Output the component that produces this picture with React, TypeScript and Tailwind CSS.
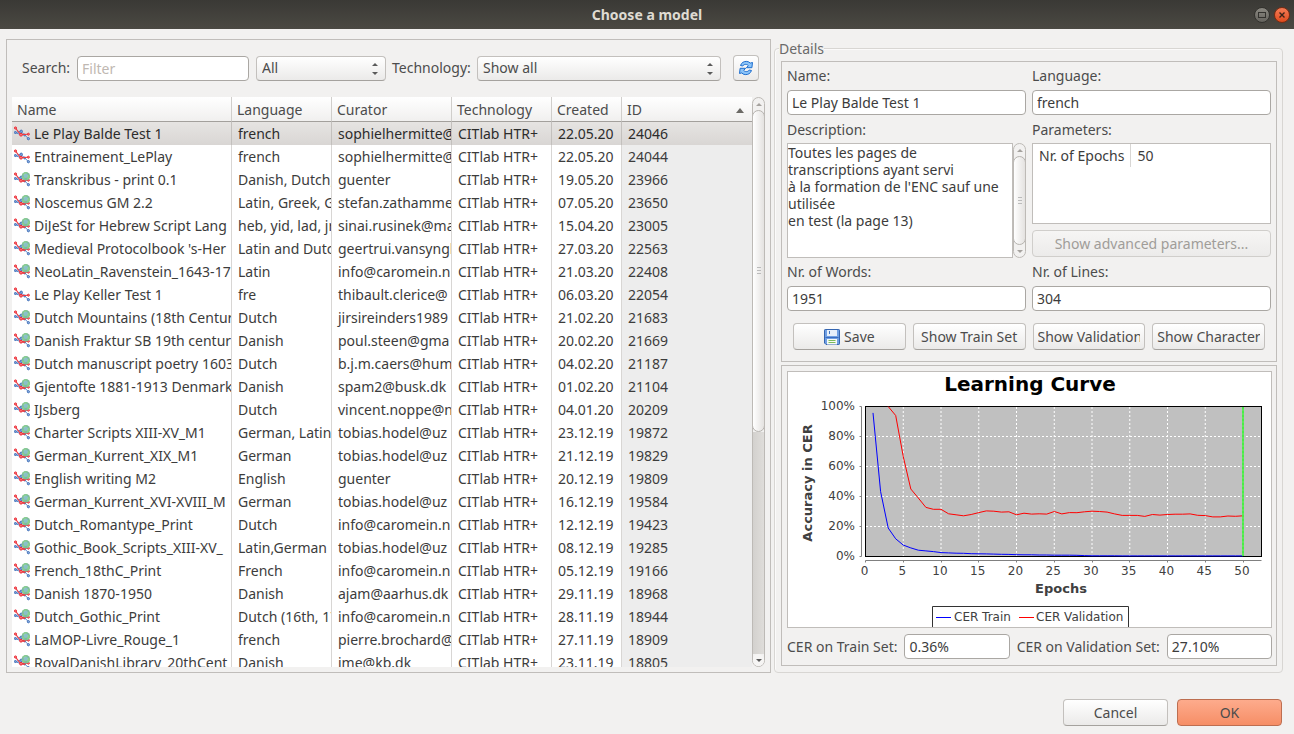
import React from "react";

type Model = [name: string, language: string, curator: string, created: string, id: number, shared: boolean];

const models: Model[] = [
  ["Le Play Balde Test 1", "french", "sophielhermitte@", "22.05.20", 24046, false],
  ["Entrainement_LePlay", "french", "sophielhermitte@", "22.05.20", 24044, false],
  ["Transkribus - print 0.1", "Danish, Dutch,", "guenter", "19.05.20", 23966, true],
  ["Noscemus GM 2.2", "Latin, Greek, G", "stefan.zathamme", "07.05.20", 23650, true],
  ["DiJeSt for Hebrew Script Lang", "heb, yid, lad, jr", "sinai.rusinek@ma", "15.04.20", 23005, true],
  ["Medieval Protocolbook 's-Her", "Latin and Dutc", "geertrui.vansyngh", "27.03.20", 22563, true],
  ["NeoLatin_Ravenstein_1643-17", "Latin", "info@caromein.n", "21.03.20", 22408, true],
  ["Le Play Keller Test 1", "fre", "thibault.clerice@", "06.03.20", 22054, false],
  ["Dutch Mountains (18th Centur", "Dutch", "jirsireinders1989", "21.02.20", 21683, true],
  ["Danish Fraktur SB 19th centur", "Danish", "poul.steen@gma", "20.02.20", 21669, true],
  ["Dutch manuscript poetry 1603", "Dutch", "b.j.m.caers@hum", "04.02.20", 21187, true],
  ["Gjentofte 1881-1913 Denmark", "Danish", "spam2@busk.dk", "01.02.20", 21104, true],
  ["IJsberg", "Dutch", "vincent.noppe@n", "04.01.20", 20209, true],
  ["Charter Scripts XIII-XV_M1", "German, Latin", "tobias.hodel@uz", "23.12.19", 19872, true],
  ["German_Kurrent_XIX_M1", "German", "tobias.hodel@uz", "21.12.19", 19829, true],
  ["English writing M2", "English", "guenter", "20.12.19", 19809, true],
  ["German_Kurrent_XVI-XVIII_M", "German", "tobias.hodel@uz", "16.12.19", 19584, true],
  ["Dutch_Romantype_Print", "Dutch", "info@caromein.n", "12.12.19", 19423, true],
  ["Gothic_Book_Scripts_XIII-XV_", "Latin,German", "tobias.hodel@uz", "08.12.19", 19285, true],
  ["French_18thC_Print", "French", "info@caromein.n", "05.12.19", 19166, true],
  ["Danish 1870-1950", "Danish", "ajam@aarhus.dk", "29.11.19", 18968, true],
  ["Dutch_Gothic_Print", "Dutch (16th, 17", "info@caromein.n", "28.11.19", 18944, true],
  ["LaMOP-Livre_Rouge_1", "french", "pierre.brochard@", "27.11.19", 18909, true],
  ["RoyalDanishLibrary_20thCent", "Danish", "jme@kb.dk", "23.11.19", 18805, true],
];

const trainCer = [
  95.7, 43.3, 19, 11.8, 7.6, 5.7, 4.2, 3.7, 3.3, 2.6, 2.4, 2.2, 2.1, 1.9, 1.8, 1.7, 1.6, 1.5, 1.4, 1.2, 1.1, 1.1, 1, 1,
  0.9, 0.9, 0.9, 0.8, 0.6, 0.5, 0.5, 0.5, 0.5, 0.4, 0.4, 0.4, 0.4, 0.4, 0.4, 0.4, 0.4, 0.4, 0.4, 0.4, 0.4, 0.4, 0.4, 0.4,
  0.4, 0.4,
];
const validationCer = [
  100, 94, 66.5, 45, 39, 32.7, 31.5, 31.5, 28.5, 27.8, 27.1, 28, 29.3, 30.4, 30.2, 29.6, 29.8, 27.8, 28.9, 28.3, 28.5,
  28.3, 30, 28.4, 29.3, 29.2, 29.8, 30.2, 30, 29.6, 28.4, 27.4, 27.4, 27.4, 26.7, 28, 27.6, 28, 28.2, 28.2, 28.4, 27.5,
  27.3, 26.4, 26.4, 27, 26.8, 27.1,
];

const plotX = (epoch: number) => 77.5 + epoch * 7.55;
const plotY = (percent: number) => 184.5 - percent * 1.5;
const toPoints = (values: number[], firstEpoch: number) =>
  values.map((v, i) => `${plotX(i + firstEpoch).toFixed(1)},${plotY(v).toFixed(1)}`).join(" ");

function NetworkIcon({ shared }: { shared: boolean }) {
  return (
    <svg viewBox="0 0 16 16" className="size-4 shrink-0" aria-hidden="true">
      <g fill="none" strokeWidth="1">
        <path d="M1.200 6.500 7 5.400 10.500 8.800 14.600 12.800M1.500 6.800 7 8.600" stroke="#5b86c8" />
        <g stroke="#3f6fb8" fill="#8fb2e3">
          <circle cx="1.300" cy="6.500" r="1" />
          <circle cx="7.200" cy="5.300" r="1.200" />
          <circle cx="10.600" cy="9" r="0.900" />
          <circle cx="14.400" cy="12.700" r="1.100" />
        </g>
        {shared && <path d="M7 8.600 10.500 9.500 12.500 7" stroke="#ee3a42" strokeWidth="1.100" />}
        <path d="M1.500 2 4 5.400 6.900 8.600 14.500 8.200" stroke="#ee3a42" strokeWidth="1.100" />
        <g stroke="#e8313b" fill="#f77">
          <circle cx="1.500" cy="2" r="1.100" />
          <circle cx="7" cy="8.700" r="1.400" />
          <circle cx="14.400" cy="8.200" r="1" />
        </g>
      </g>
      {shared && (
        <g>
          <circle cx="11.900" cy="4.200" r="4.200" fill="#7dbb9c" />
          <path d="M8.600 2c1-1.500 3-2 4.600-1.500-.3 1.300-1.400 1.200-1.800 2.300-.4 1-1.900.8-2.800-.8ZM8 4.600c1.700.1 2.700.8 2.500 2.200l-.6 1.100C8.600 7 7.900 5.900 8 4.600ZM13 3.200c1.200-.7 2.200-.2 2.900.9-.1 1.900-1 3-2.500 3.700-.7-1.400-.1-2-.4-4.600Z" fill="#8ad08a" />
          <circle cx="11.700" cy="3.800" r="2.200" fill="#8fc3dd" opacity=".7" />
        </g>
      )}
    </svg>
  );
}

function RefreshIcon() {
  return (
    <svg viewBox="0 0 16 16" className="size-4" aria-hidden="true">
      <g fill="#8cc4f8" stroke="#1f6fd0" strokeWidth="1" strokeLinejoin="round">
        <path d="M2.500 5.500C3.500 2.500 6 1.200 8.800 1.400c1.600.1 2.600.8 3.400 1.700l2.300-.6-.6 5.200H8.400l1.900-2.100c-.8-.9-1.600-1.200-2.600-1.200-1.400 0-2.300.5-2.900 1.600Z" />
        <path d="M13.500 10.500c-1 3-3.500 4.300-6.300 4.100-1.600-.1-2.600-.8-3.400-1.700l-2.300.6.6-5.200h5.500l-1.900 2.100c.8.9 1.600 1.200 2.600 1.200 1.400 0 2.300-.5 2.900-1.600Z" />
      </g>
    </svg>
  );
}

function SaveIcon() {
  return (
    <svg viewBox="0 0 16 16" className="size-4" aria-hidden="true">
      <path d="M.5 1.200Q.5.5 1.200.5h13.600q.7 0 .7.7v13.600q0 .7-.7.700H2L.5 14Z" fill="#6f9fe3" stroke="#3565b0" />
      <rect x="3" y="1" width="10" height="6" fill="#e6effb" />
      <path d="M5.500 2v3" stroke="#4475bd" />
      <path d="M1.500 8.500h13" stroke="#3a6cc0" />
      <rect x="3" y="10" width="10" height="5.500" fill="#f7f9f4" />
      <path d="M4.500 11.500h7M4.500 13.500h7" stroke="#7cba5c" />
    </svg>
  );
}

function Arrow({ up = false }: { up?: boolean }) {
  return (
    <svg viewBox="0 0 6 4" preserveAspectRatio="none" className="h-[3px] w-1.5" aria-hidden="true">
      <path d={up ? "M0 4 3 0 6 4Z" : "M0 0 3 4 6 0Z"} fill="currentColor" />
    </svg>
  );
}

const buttonLook =
  "flex items-center justify-center rounded-[4px] border border-[#c3c0bd] border-b-[#a5a29e] bg-linear-to-b from-white to-[#ebeae9] text-[#4c4c4c]";
const inputLook =
  "block h-[25px] w-full min-w-0 rounded-[4px] border border-[#aaa7a3] bg-white px-1 text-[#3c3c3c] outline-none placeholder:text-[#bfb8b2]";

function Select({ label, options, className }: { label: string; options: string[]; className: string }) {
  return (
    <div className={`relative min-w-0 ${className}`}>
      <select
        aria-label={label}
        className="block h-[25px] w-full appearance-none rounded-[4px] border border-[#c3c0bd] border-b-[#a5a29e] bg-linear-to-b from-white to-[#ebeae9] px-[5px] text-[#4c4c4c] outline-none"
      >
        {options.map((o) => (
          <option key={o}>{o}</option>
        ))}
      </select>
      <span className="pointer-events-none absolute inset-y-0 right-2 flex flex-col items-center justify-center gap-1.5 pt-0.5 text-[#5a5a5a]">
        <Arrow up />
        <Arrow />
      </span>
    </div>
  );
}

function Scrollbar({ thumb, rest, end }: { thumb: string; rest: string; end: string }) {
  return (
    <div className="flex w-[13px] shrink-0 flex-col overflow-hidden rounded-full border border-[#bdbab6] bg-[#f2f1f0]" aria-hidden="true">
      <span className="flex h-3 shrink-0 items-center justify-center text-[#a5a29e]">
        <Arrow up />
      </span>
      <span className={`-mx-px flex flex-col items-center justify-center gap-0.5 rounded-full border border-[#b5b2ae] bg-linear-to-r from-white to-[#e4e2e0] ${thumb}`}>
        <i className="h-px w-1 bg-[#bbb]" />
        <i className="h-px w-1 bg-[#bbb]" />
        <i className="h-px w-1 bg-[#bbb]" />
      </span>
      <span className={`bg-linear-to-r from-[#d3d1ce] to-[#dfddda] ${rest}`} />
      <span className={`flex h-3 shrink-0 items-center justify-center ${end}`}>
        <Arrow />
      </span>
    </div>
  );
}

function Field({ id, label, value }: { id: string; label: string; value: string }) {
  return (
    <div className="flex flex-col gap-1">
      <label htmlFor={id} className="leading-5">{label}</label>
      <input id={id} className={inputLook} defaultValue={value} readOnly />
    </div>
  );
}

function LearningCurve() {
  const epochs = [0, 5, 10, 15, 20, 25, 30, 35, 40, 45, 50];
  const percents = [0, 20, 40, 60, 80, 100];
  return (
    <svg viewBox="0 0 483 255" preserveAspectRatio="xMidYMin meet" className="block h-full w-full font-['DejaVu_Sans',sans-serif]" role="img" aria-label="Learning Curve">
      <text x="242" y="19" textAnchor="middle" fontSize="20" fontWeight="700" fill="#000">Learning Curve</text>
      <rect x="77.500" y="34.500" width="396" height="150" fill="#c0c0c0" />
      <g stroke="#fff" strokeWidth="1" strokeDasharray="2 2">
        {epochs.slice(1).map((e) => <line key={e} x1={plotX(e)} x2={plotX(e)} y1="35" y2="184" />)}
        {percents.slice(1, 5).map((p) => <line key={p} x1="78" x2="473" y1={plotY(p)} y2={plotY(p)} />)}
      </g>
      <rect x="77.500" y="34.500" width="396" height="150" fill="none" stroke="#000" />
      <polyline points={toPoints(trainCer, 1)} fill="none" stroke="#00f" strokeWidth="1" />
      <polyline points={toPoints(validationCer, 3)} fill="none" stroke="#f00" strokeWidth="1" />
      <line x1={plotX(50)} x2={plotX(50)} y1="35" y2="184" stroke="#5fe85a" strokeWidth="2" />
      <line x1={plotX(50)} x2={plotX(50)} y1="35" y2="184" stroke="#35f035" strokeWidth="1" strokeDasharray="2 2" />
      <g stroke="#808080" strokeWidth="1">
        <path d="M73.500 34.500V184.500M77.500 188.500H473.500" />
        {percents.map((p) => <path key={p} d={`M71.500 ${plotY(p)}h2`} />)}
        {epochs.map((e) => <path key={e} d={`M${Math.floor(plotX(e)) + 0.5} 188.500v2`} />)}
      </g>
      <g fontSize="12" fill="#404040">
        {percents.map((p) => <text key={p} x="67" y={plotY(p) + 3.5} textAnchor="end">{p}%</text>)}
        {epochs.map((e) => <text key={e} x={plotX(e) - 1} y="203" textAnchor="middle">{e}</text>)}
      </g>
      <g fontSize="13" fontWeight="700" fill="#404040" textAnchor="middle">
        <text x="273" y="221">Epochs</text>
        <text transform="translate(24 111) rotate(-90)">Accuracy in CER</text>
      </g>
      <path d="M144.500 255V234.500H340.500V255" fill="none" stroke="#333" />
      <path d="M148 245.500h15" stroke="#00f" />
      <path d="M231 245.500h15" stroke="#f00" />
      <g fontSize="12" fill="#404040">
        <text x="166" y="249">CER Train</text>
        <text x="248" y="249">CER Validation</text>
      </g>
    </svg>
  );
}

export default function App() {
  const th = "border-r border-[#d0cecb] px-[5px] pt-0.5 text-left font-normal";
  const td = "overflow-hidden border-r border-[#d8d6d4] pl-1.5 whitespace-nowrap";
  return (
    <div className="flex h-screen flex-col bg-[#f2f1f0] font-['Noto_Sans',sans-serif] text-[14px] leading-5 text-[#4c4c4c]">
      <header className="relative flex h-[29px] shrink-0 items-center justify-center bg-linear-to-b from-[#3a3935] to-[#4b4943] text-[#dfdbd2]">
        <h1 className="font-bold">Choose a model</h1>
        <div className="absolute right-1 flex gap-1">
          <button aria-label="Maximize" className="flex size-4 items-center justify-center rounded-full border border-[#33322e] bg-linear-to-b from-[#8a8881] to-[#66645e]">
            <span className="h-1.5 w-2 border border-[#33322e]" />
          </button>
          <button aria-label="Close" className="flex size-4 items-center justify-center rounded-full border border-[#7a2c12] bg-linear-to-b from-[#f47b55] to-[#df4b1b]">
            <svg viewBox="0 0 8 8" className="size-2"><path d="m1.500 1.500 5 5m0-5-5 5" stroke="#3b2318" strokeWidth="1.400" /></svg>
          </button>
        </div>
      </header>

      <main className="grid min-h-0 flex-1 grid-cols-[minmax(0,3fr)_minmax(0,2fr)] gap-[3px] pt-2.5 pr-2.5 pl-1.5">
        <section className="flex min-h-0 flex-col border border-[#c0bdba] p-[5px]">
          <div className="flex items-center pt-2.5 pr-1.5 pb-4 pl-2.5">
            <label htmlFor="search" className="w-[55px] shrink-0">Search:</label>
            <div className="min-w-0 flex-[172]">
              <input id="search" placeholder="Filter" className={inputLook} />
            </div>
            <Select label="Filter scope" options={["All", "Mine", "Shared"]} className="ml-[7px] flex-[130]" />
            <span className="ml-1.5 w-[85px] shrink-0">Technology:</span>
            <Select label="Technology" options={["Show all", "CITlab HTR+"]} className="flex-[244]" />
            <button aria-label="Refresh" className={`${buttonLook} ml-3 size-[26px] shrink-0`}><RefreshIcon /></button>
          </div>
          <div className="flex min-h-0 flex-1">
            <div className="min-w-0 flex-1 overflow-y-auto bg-white [scrollbar-width:none]">
              <table className="w-full table-fixed border-separate border-spacing-0 text-[#3c3c3c]">
                <colgroup>
                  <col className="w-[220px]" />
                  <col className="w-[100px]" />
                  <col className="w-[120px]" />
                  <col className="w-[100px]" />
                  <col className="w-[70px]" />
                  <col />
                </colgroup>
                <thead className="sticky top-0 z-10 text-[#4c4c4c]">
                  <tr className="h-[25px] bg-linear-to-b from-white to-[#f0efee] *:border-b *:border-b-[#a3a09c]">
                    <th className={th}>Name</th>
                    <th className={th}>Language</th>
                    <th className={th}>Curator</th>
                    <th className={th}>Technology</th>
                    <th className={th}>Created</th>
                    <th className="px-[5px] pt-0.5 text-left font-normal">
                      <span className="flex items-center justify-between pr-[3px]">ID<svg viewBox="0 0 8 5" className="h-[5px] w-2"><path d="M0 5 4 0 8 5Z" fill="#6b6965" /></svg></span>
                    </th>
                  </tr>
                </thead>
                <tbody>
                  {models.map(([name, language, curator, created, id, shared], i) => (
                    <tr key={id} className={i === 0 ? "h-[23px] bg-linear-to-b from-[#e6e4e2] to-[#d9d6d4] text-[#2c2c2c] *:border-[#c3c0bd]" : "h-[23px]"}>
                      <td className="overflow-hidden border-r border-[#d8d6d4] pl-0.5 whitespace-nowrap">
                        <span className="flex items-center gap-1"><NetworkIcon shared={shared} />{name}</span>
                      </td>
                      <td className={td}>{language}</td>
                      <td className={td}>{curator}</td>
                      <td className={td}>CITlab HTR+</td>
                      <td className={td}>{created}</td>
                      <td className={i === 0 ? "pl-1.5" : "bg-[#ededed] pl-1.5"}>{id}</td>
                    </tr>
                  ))}
                </tbody>
              </table>
            </div>
            <Scrollbar thumb="flex-[59]" rest="flex-[41]" end="rounded-t-full bg-[#f6f5f4] text-[#5a5a5a]" />
          </div>
        </section>

        <section className="relative mt-[9px] mr-px flex min-h-0 flex-col gap-[3px] rounded-[4px] border border-[#d8d6d3] pt-3 pr-[5px] pb-1.5 pl-1.5 shadow-[inset_1px_1px_0_#fbfafa]">
          <h2 className="absolute -top-2.5 left-1 bg-[#f2f1f0] leading-5 text-[#6a6a6a]">Details</h2>

          <div className="grid grid-cols-2 gap-x-1.5 gap-y-1 border border-[#c0bdba] px-[5px] pt-1 pb-[11px]">
            <Field id="name" label="Name:" value="Le Play Balde Test 1" />
            <Field id="language" label="Language:" value="french" />
            <div className="flex flex-col gap-[3px] pt-px">
              <label htmlFor="description">Description:</label>
              <div className="flex h-[115px]">
                <textarea
                  id="description"
                  readOnly
                  className="block min-w-0 flex-1 resize-none overflow-hidden border border-[#c0bdba] bg-white pr-1 leading-[17px] text-[#3c3c3c] outline-none"
                  defaultValue={"Toutes les pages de transcriptions ayant servi\nà la formation de l'ENC sauf une utilisée\nen test (la page 13)"}
                />
                <Scrollbar thumb="flex-1" rest="" end="text-[#a5a29e]" />
              </div>
            </div>
            <div className="flex flex-col gap-[3px] pt-px">
              <span>Parameters:</span>
              <div className="h-[81px] border border-[#c0bdba] bg-white text-[#3c3c3c]">
                <table>
                  <tbody>
                    <tr className="h-[23px]">
                      <th className="border-r border-[#d8d6d4] pr-1.5 pl-1.5 text-left font-normal">Nr. of Epochs</th>
                      <td className="pl-1.5">50</td>
                    </tr>
                  </tbody>
                </table>
              </div>
              <button disabled className="mt-[3px] h-[27px] rounded-[4px] border border-[#d0cecb] bg-linear-to-b from-[#f6f5f4] to-[#ecebea] text-[#a09d99]">
                Show advanced parameters...
              </button>
            </div>
            <Field id="words" label="Nr. of Words:" value="1951" />
            <Field id="lines" label="Nr. of Lines:" value="304" />
            <div className="col-span-2 grid grid-cols-4 gap-[7px] px-1.5 pt-2 *:h-[27px] *:px-1">
              <button className={`${buttonLook} gap-1`}><SaveIcon />Save</button>
              {["Show Train Set", "Show Validation Set", "Show Characters"].map((t, i) => (
                <button key={t} className={buttonLook}>
                  <span className={i ? "flex-1 overflow-hidden text-left whitespace-nowrap" : "whitespace-nowrap"}>{t}</span>
                </button>
              ))}
            </div>
          </div>

          <div className="flex min-h-0 flex-1 flex-col gap-1.5 border border-[#c0bdba] pt-[5px] pr-1 pb-1.5 pl-[5px]">
            <div className="min-h-0 flex-1 overflow-hidden border border-[#c0bdba] bg-white">
              <LearningCurve />
            </div>
            <div className="flex items-center">
              <label htmlFor="cer-train" className="mr-[7px] shrink-0">CER on Train Set:</label>
              <input id="cer-train" readOnly className={inputLook} defaultValue="0.36%" />
              <label htmlFor="cer-validation" className="mx-[7px] shrink-0">CER on Validation Set:</label>
              <input id="cer-validation" readOnly className={inputLook} defaultValue="27.10%" />
            </div>
          </div>
        </section>
      </main>

      <footer className="flex shrink-0 justify-end gap-[9px] pt-[26px] pr-3 pb-2">
        <button className={`${buttonLook} h-[27px] w-[105px]`}>Cancel</button>
        <button className="h-[27px] w-[105px] rounded-[4px] border border-[#bd6e50] bg-linear-to-b from-[#fdab8c] to-[#f68e66] text-[#4c4c4c]">OK</button>
      </footer>
    </div>
  );
}
